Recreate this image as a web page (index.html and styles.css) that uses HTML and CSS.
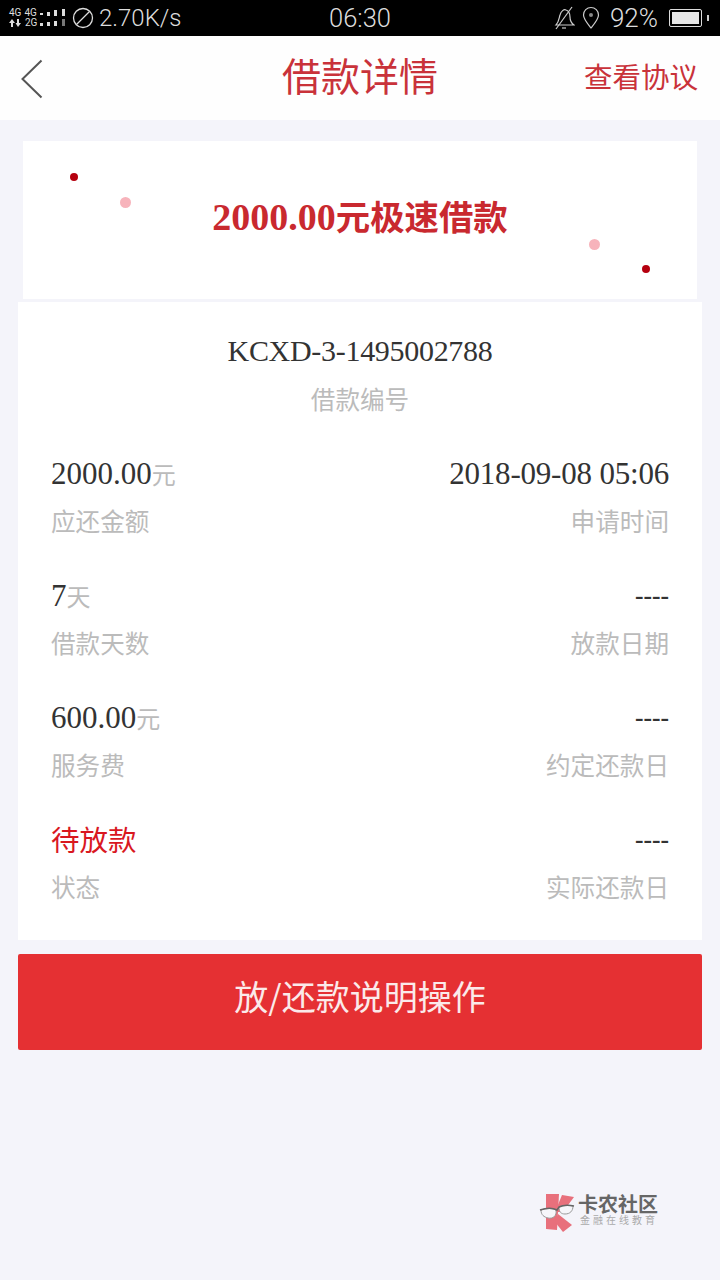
FILE: index.html
```html
<!DOCTYPE html>
<html lang="en">
  <head>
    <meta charset="UTF-8" />
    <meta name="viewport" content="width=device-width, initial-scale=1.0" />
    <title>借款详情</title>
    <link rel="stylesheet" href="styles.css">
  </head>
  <body>
    <div class="statusbar">
      <div class="status-left">
        <div class="net">
          <div class="net-row"><span>4G</span><span>4G</span></div>
          <div class="net-row">
            <svg class="arrows" width="13" height="10" viewBox="0 0 13 10">
              <path d="M3 1 L6 5 H4 V9 H2 V5 H0 Z M9 9 L6.5 5 H8 V1 H10 V5 H12 Z" fill="#ddd" />
            </svg>
            <span>2G</span>
          </div>
        </div>
        <svg class="signal" width="26" height="22" viewBox="0 0 26 22">
          <g fill="#ddd">
            <rect x="0" y="6" width="3" height="2" />
            <rect x="0" y="16" width="3" height="3" />
            <rect x="7" y="5" width="3" height="4" />
            <rect x="7" y="15" width="3" height="4" />
            <rect x="14" y="3" width="3" height="6" />
            <rect x="14" y="14" width="3" height="5" />
            <rect x="22" y="2" width="3" height="7" />
          </g>
          <rect x="22" y="12" width="3" height="7" fill="#777" />
        </svg>
        <svg class="nodata" width="22" height="22" viewBox="0 0 22 22">
          <circle cx="11" cy="11" r="9.5" fill="none" stroke="#ddd" stroke-width="1.3" />
          <path d="M4.5 17.5 L17.5 4.5" stroke="#ddd" stroke-width="1.3" />
        </svg>
        <span class="speed">2.70K/s</span>
      </div>
      <div class="clock">06:30</div>
      <div class="status-right">
        <svg width="22" height="24" viewBox="0 0 22 24">
          <g fill="none" stroke="#ccc" stroke-width="1.2">
            <path d="M3 19 C6 16 6 12 7 9 C8 5 11 3 13 4 C16 5 17 8 17 11 C17 14 18 17 21 19 Z" />
            <path d="M9 22 L13 22" />
            <path d="M19 1 L3 23" />
          </g>
        </svg>
        <svg class="pin" width="18" height="24" viewBox="0 0 18 24">
          <path d="M9 22 C5 17 1.5 13 1.5 9 A7.5 7.5 0 0 1 16.5 9 C16.5 13 13 17 9 22 Z" fill="none" stroke="#ccc" stroke-width="1.2" />
          <circle cx="9" cy="9" r="2" fill="#888" />
        </svg>
        <span class="battery-pct">92%</span>
        <div class="battery"><div class="battery-fill"></div></div>
        <div class="battery-cap"></div>
      </div>
    </div>

    <div class="header">
      <svg class="back" width="24" height="40" viewBox="0 0 24 40">
        <path d="M21.5 1.5 L2.5 20 L21.5 38.5" fill="none" stroke="#555" stroke-width="2" />
      </svg>
      <h1 class="title">借款详情</h1>
      <a class="agreement">查看协议</a>
    </div>

    <div class="banner">
      <span class="dot dot-a"></span>
      <span class="dot dot-b"></span>
      <span class="dot dot-c"></span>
      <span class="dot dot-d"></span>
      <h2 class="banner-text">2000.00<span class="banner-cjk">元极速借款</span></h2>
    </div>

    <div class="card">
      <div class="loan-no">
        <div class="value loan-value">KCXD-3-1495002788</div>
        <div class="label">借款编号</div>
      </div>
      <div class="rows">
        <div class="cell">
          <div class="value">2000.00<span class="unit">元</span></div>
          <div class="label">应还金额</div>
        </div>
        <div class="cell right">
          <div class="value date">2018-09-08 05:06</div>
          <div class="label">申请时间</div>
        </div>
        <div class="cell">
          <div class="value">7<span class="unit">天</span></div>
          <div class="label">借款天数</div>
        </div>
        <div class="cell right">
          <div class="value dash">----</div>
          <div class="label">放款日期</div>
        </div>
        <div class="cell">
          <div class="value">600.00<span class="unit">元</span></div>
          <div class="label">服务费</div>
        </div>
        <div class="cell right">
          <div class="value dash">----</div>
          <div class="label">约定还款日</div>
        </div>
        <div class="cell">
          <div class="value status">待放款</div>
          <div class="label">状态</div>
        </div>
        <div class="cell right">
          <div class="value dash">----</div>
          <div class="label">实际还款日</div>
        </div>
      </div>
    </div>

    <button type="button" class="action">放/还款说明操作</button>

    <div class="watermark">
      <svg width="38" height="42" viewBox="0 0 38 42">
        <g fill="#e8707c">
          <path d="M8 2 L21 2 L19 38 L8 37 Z" />
          <path d="M24 3 L36 5 L25 20 L17 20 Z" />
          <path d="M20 22 L34 33 L25 40 L17 30 Z" />
        </g>
        <g fill="#f6f6fa" stroke="#999" stroke-width="1">
          <path d="M3 18 C8 16 15 16 18 18 C19 24 15 27 10 26 C6 25 3 23 3 18 Z" />
          <path d="M21 15 C25 13 31 13 35 14 C35 19 32 22 27 22 C23 22 21 20 21 15 Z" />
        </g>
        <path d="M2 18 C8 16 15 16 19 18 L21 15 C25 13 31 13 36 14" fill="none" stroke="#666" stroke-width="1.6" />
      </svg>
      <div class="wm-text">
        <div class="wm-name">卡农社区</div>
        <div class="wm-sub">金融在线教育</div>
      </div>
    </div>
  </body>
</html>
```

FILE: styles.css
```css
* {
  box-sizing: border-box;
}
body {
  margin: 0;
  width: 720px;
  height: 1280px;
  overflow: hidden;
  background-color: #f4f4fa;
  font-family: "Liberation Serif", "Noto Sans CJK SC", serif;
  position: relative;
}
.statusbar {
  display: flex;
  justify-content: space-between;
  align-items: center;
  height: 36px;
  padding: 0 11px 0 9px;
  background-color: #000;
  color: #ddd;
  font-family: Roboto, sans-serif;
  position: relative;
}
.status-left,
.status-right {
  display: flex;
  align-items: center;
}
.net {
  width: 31px;
  font-size: 10px;
  line-height: 10px;
}
.net-row {
  display: flex;
  gap: 3px;
}
.nodata {
  margin-left: 6px;
}
.speed {
  margin-left: 5px;
  font-size: 24px;
  font-weight: 300;
}
.clock {
  position: absolute;
  left: 0;
  right: 0;
  text-align: center;
  font-size: 25.5px;
  font-weight: 300;
}
.pin {
  margin-left: 7px;
}
.battery-pct {
  margin-left: 10px;
  font-size: 26px;
  font-weight: 300;
}
.battery {
  width: 33px;
  height: 18px;
  margin-left: 11px;
  padding: 2px;
  border: 1px solid #ddd;
  border-radius: 2px;
}
.battery-fill {
  width: 27px;
  height: 12px;
  background-color: #e6e6e6;
}
.battery-cap {
  width: 2px;
  height: 6px;
  margin-left: 5px;
  background-color: #ccc;
}
.header {
  display: flex;
  align-items: center;
  justify-content: center;
  height: 84px;
  padding-bottom: 8px;
  background-color: #fefefe;
  position: relative;
}
.back {
  position: absolute;
  left: 20px;
  top: 23px;
}
.title {
  margin: 0;
  font-family: "Noto Sans CJK SC", sans-serif;
  font-size: 39px;
  font-weight: 400;
  color: #c9323a;
}
.agreement {
  position: absolute;
  right: 22px;
  top: 19px;
  font-family: "Noto Sans CJK SC", sans-serif;
  font-size: 28.5px;
  color: #c9323a;
}
.banner {
  display: flex;
  align-items: center;
  justify-content: center;
  height: 158px;
  margin: 21px 23px 0 23px;
  background-color: #fff;
  position: relative;
}
.banner-text {
  margin: 0 0 10px;
  font-family: "Liberation Serif", "Noto Sans CJK SC", serif;
  font-size: 38px;
  font-weight: 700;
  color: #c9292f;
}
.banner-cjk {
  font-size: 34.4px;
}
.dot {
  position: absolute;
  border-radius: 50%;
}
.dot-a,
.dot-d {
  width: 8px;
  height: 8px;
  background-color: #b5000f;
}
.dot-b,
.dot-c {
  width: 11px;
  height: 11px;
  background-color: #f7b3bb;
}
.dot-a {
  left: 47px;
  top: 32px;
}
.dot-b {
  left: 97px;
  top: 56px;
}
.dot-c {
  left: 566px;
  top: 98px;
}
.dot-d {
  left: 619px;
  top: 124px;
}
.card {
  height: 638px;
  margin: 3px 18px 0;
  padding: 28px 33px 0;
  background-color: #fff;
}
.value {
  height: 42px;
  font-size: 31px;
  line-height: 44px;
  color: #333;
}
.loan-value {
  font-size: 30px;
  line-height: 42px;
  letter-spacing: -0.3px;
}
.date {
  letter-spacing: -0.2px;
}
.dash {
  font-size: 25.6px;
  font-weight: 700;
}
.unit {
  font-family: "Noto Sans CJK SC", sans-serif;
  font-size: 24px;
  color: #bbb;
}
.label {
  height: 36px;
  margin-top: 8px;
  font-family: "Noto Sans CJK SC", sans-serif;
  font-size: 24.6px;
  line-height: 36px;
  color: #bbb;
}
.loan-no {
  text-align: center;
}
.rows {
  display: grid;
  grid-template-columns: 1fr 1fr;
  row-gap: 36px;
  margin-top: 36px;
}
.right {
  text-align: right;
}
.status {
  font-family: "Noto Sans CJK SC", sans-serif;
  font-size: 28.5px;
  line-height: 42px;
  color: #d9181f;
}
.action {
  display: block;
  width: 684px;
  height: 96px;
  margin: 14px 18px 0;
  padding-bottom: 15px;
  border: none;
  border-radius: 2px;
  background-color: #e53033;
  color: #fbeaea;
  font-family: "Noto Sans CJK SC", sans-serif;
  font-size: 34px;
}
.watermark {
  position: absolute;
  left: 538px;
  top: 1192px;
  display: flex;
  gap: 2px;
}
.wm-text {
  width: 82px;
  padding-top: 2px;
}
.wm-name {
  font-family: "Noto Sans CJK SC", sans-serif;
  font-size: 20px;
  font-weight: 700;
  line-height: 20px;
  color: #666;
}
.wm-sub {
  padding-left: 2px;
  font-family: "Noto Sans CJK SC", sans-serif;
  font-size: 10px;
  line-height: 12px;
  letter-spacing: 3px;
  color: #aaa;
}
```
